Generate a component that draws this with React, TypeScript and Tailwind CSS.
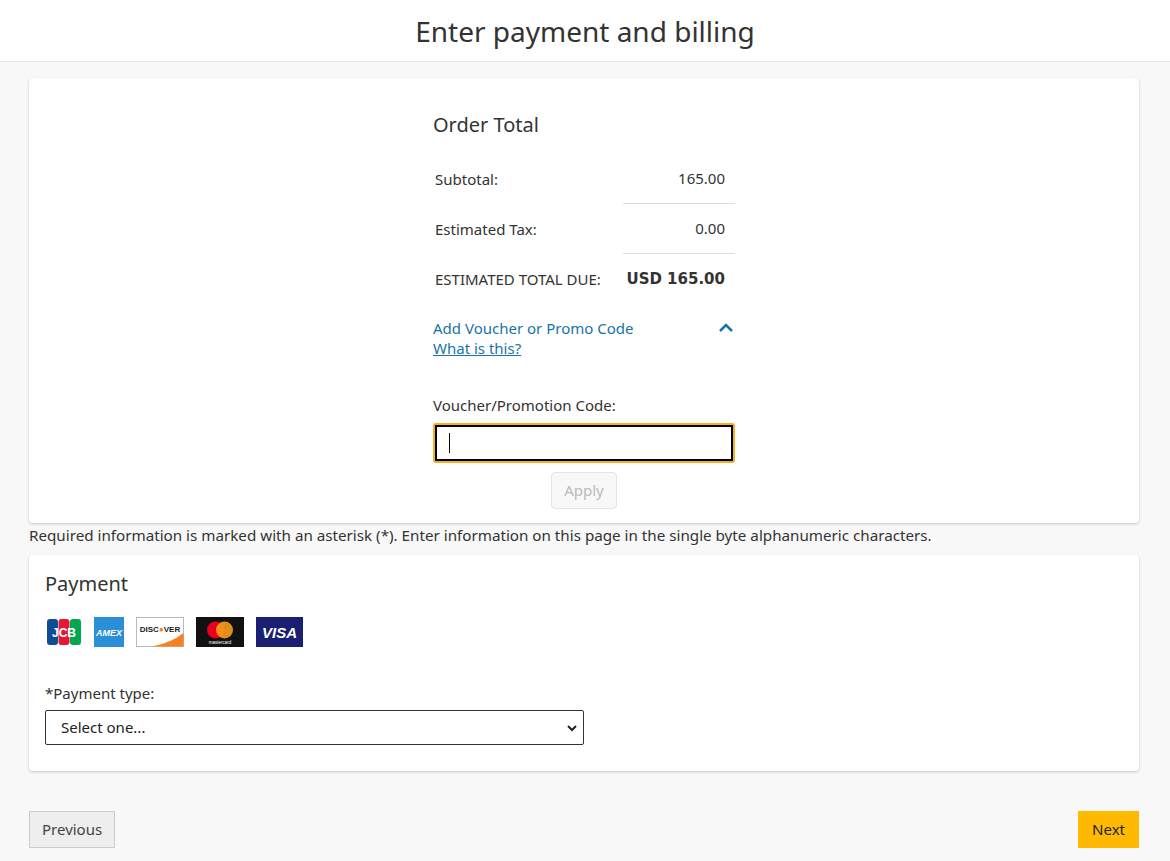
export default function App() {
  const f = { fontFamily: '"Noto Sans", "DejaVu Sans", sans-serif' };
  return (
    <div style={f} className="min-h-[861px] bg-[#f8f8f8] text-[#333] text-[15px]">
      <div className="h-[62px] bg-white border-b border-[#e5e5e5] flex items-center justify-center">
        <h1 className="text-[28px] text-[#333]">Enter payment and billing</h1>
      </div>
      <div className="pl-[29px] pr-[31px] pt-[16px]">
        <div className="bg-white rounded shadow-[0_1px_3px_rgba(0,0,0,0.2)] pt-[32px] pb-[14px] flex flex-col items-center">
          <div className="w-[302px]">
            <div className="text-[20px] mb-[14px]">Order Total</div>
            <div className="flex items-center h-[50px] pl-[2px]">
              <div className="flex-1">Subtotal:</div>
              <div className="w-[112px] h-full flex items-center justify-end pr-[10px] border-b border-[#ddd]">165.00</div>
            </div>
            <div className="flex items-center h-[50px] pl-[2px]">
              <div className="flex-1">Estimated Tax:</div>
              <div className="w-[112px] h-full flex items-center justify-end pr-[10px] border-b border-[#ddd]">0.00</div>
            </div>
            <div className="flex items-center h-[50px] pl-[2px]">
              <div className="flex-1">ESTIMATED TOTAL DUE:</div>
              <div className="pr-[10px] font-bold" style={{ fontFamily: '"DejaVu Sans", sans-serif' }}>USD 165.00</div>
            </div>
            <div className="flex justify-between mt-[14px] text-[#1a73a8] leading-[20px]">
              <div>
                <div>Add Voucher or Promo Code</div>
                <div className="underline">What is this?</div>
              </div>
              <svg width="16" height="12" viewBox="0 0 16 12" className="mt-[4px] mr-[1px]"><path d="M2 9 L8 3 L14 9" stroke="#1a73a8" strokeWidth="2.5" fill="none" /></svg>
            </div>
            <div className="mt-[36px] mb-[6px]">Voucher/Promotion Code:</div>
            <div className="border-2 border-[#f5b21b] rounded-[3px]">
              <div className="border-2 border-black h-[36px] flex items-center pl-[12px]"><div className="w-px h-[20px] bg-black" /></div>
            </div>
            <div className="flex justify-center mt-[9px]">
              <div className="border border-[#e5e5e5] bg-[#f8f8f8] text-[#bbb] px-[12px] h-[37px] flex items-center rounded-sm">Apply</div>
            </div>
          </div>
        </div>
        <div className="py-[1px] text-[15.2px] leading-[22px]">Required information is marked with an asterisk (*). Enter information on this page in the single byte alphanumeric characters.</div>
        <div className="bg-white rounded shadow-[0_1px_3px_rgba(0,0,0,0.2)] mt-[8px] px-[16px] pt-[14px] pb-[26px]">
          <div className="text-[20px]">Payment</div>
          <div className="flex items-center gap-[12px] mt-[18px] ml-[1px]">
            <svg width="36" height="28" viewBox="0 0 36 28">
              <rect x="1" y="1" width="11" height="26" rx="3" fill="#0e4c96" />
              <rect x="12.5" y="1" width="11" height="26" rx="3" fill="#e21836" />
              <rect x="24" y="1" width="11" height="26" rx="3" fill="#00a650" />
              <text x="18" y="19" textAnchor="middle" fontSize="12" fontWeight="bold" fill="#fff" fontFamily="Liberation Sans">JCB</text>
            </svg>
            <svg width="30" height="30" viewBox="0 0 30 30">
              <rect width="30" height="30" fill="#2a8fd6" />
              <text x="15" y="19" textAnchor="middle" fontSize="9" fontWeight="bold" fill="#fff" fontStyle="italic" fontFamily="Liberation Sans">AMEX</text>
            </svg>
            <svg width="48" height="30" viewBox="0 0 48 30">
              <rect x="0.5" y="0.5" width="47" height="29" fill="#fff" stroke="#bbb" />
              <path d="M16 29.5 L47.5 29.5 L47.5 16 Q35 26 16 29.5 Z" fill="#f58220" />
              <text x="24" y="15" textAnchor="middle" fontSize="8" fontWeight="bold" fill="#222" fontFamily="Liberation Sans">DISC<tspan fill="#f58220">●</tspan>VER</text>
            </svg>
            <svg width="48" height="30" viewBox="0 0 48 30">
              <rect width="48" height="30" fill="#111" />
              <circle cx="19.5" cy="13" r="8.5" fill="#eb001b" />
              <circle cx="28.5" cy="13" r="8.5" fill="#f79e1b" fillOpacity="0.9" />
              <text x="24" y="27" textAnchor="middle" fontSize="4.5" fill="#fff" fontFamily="Liberation Sans">mastercard</text>
            </svg>
            <svg width="47" height="30" viewBox="0 0 47 30">
              <rect width="47" height="30" fill="#1a1f71" />
              <text x="23.5" y="21" textAnchor="middle" fontSize="15" fontWeight="bold" fontStyle="italic" fill="#fff" fontFamily="Liberation Sans">VISA</text>
            </svg>
          </div>
          <div className="mt-[35px] mb-[6px]">*Payment type:</div>
          <div className="w-[539px] h-[35px] border border-[#333] rounded-[2px] flex items-center justify-between pl-[15px] pr-[6px] text-[#222]">
            <span>Select one...</span>
            <svg width="10" height="8" viewBox="0 0 10 8"><path d="M1 2 L5 6 L9 2" stroke="#222" strokeWidth="2" fill="none" /></svg>
          </div>
        </div>
        <div className="flex justify-between mt-[40px]">
          <div className="h-[37px] px-[12px] flex items-center bg-[#eee] border border-[#ccc] text-[#444]">Previous</div>
          <div className="h-[37px] px-[14px] flex items-center bg-[#ffb900] text-[#222]">Next</div>
        </div>
      </div>
    </div>
  );
}
